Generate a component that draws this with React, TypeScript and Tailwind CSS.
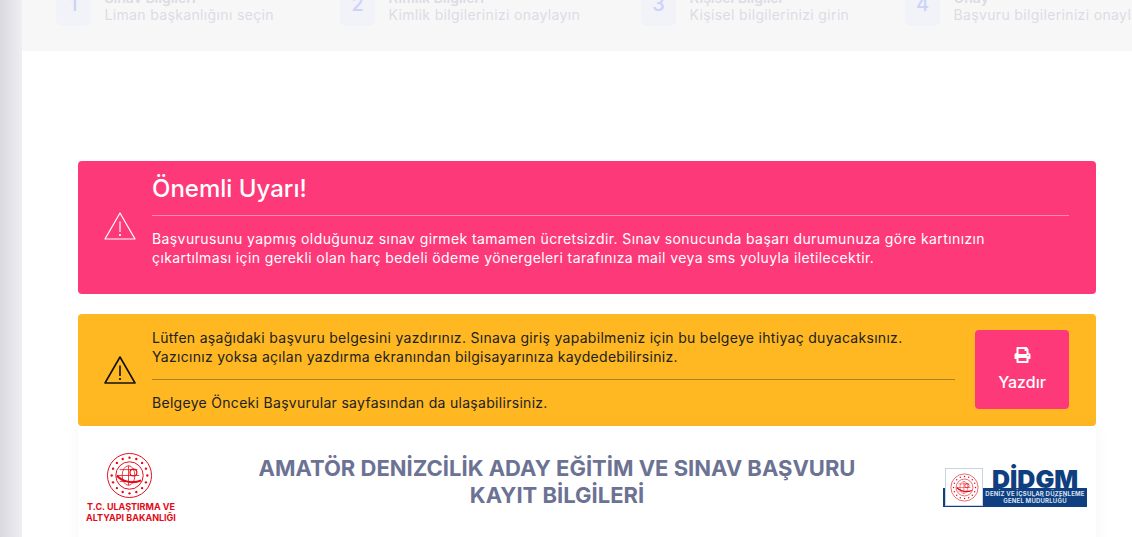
import {FaPrint} from "react-icons/fa";

const font = {fontFamily: "Inter, 'Noto Sans', sans-serif"};

const steps = [
  {no: "1", title: "Sınav Bilgileri", text: "Liman başkanlığını seçin", w: "w-[284px]"},
  {no: "2", title: "Kimlik Bilgileri", text: "Kimlik bilgilerinizi onaylayın", w: "w-[301px]"},
  {no: "3", title: "Kişisel Bilgiler", text: "Kişisel bilgilerinizi girin", w: "w-[264px]"},
  {no: "4", title: "Onay", text: "Başvuru bilgilerinizi onaylayın", w: "w-[227px]"},
];

function Warning({className, stroke}: {className: string; stroke: number}) {
  return (
    <svg viewBox="0 0 32 28" fill="none" stroke="currentColor" strokeLinejoin="round" className={className}>
      <path d="M16 1 L31 27 H1 Z" strokeWidth={stroke} />
      <path d="M16 9.5 V20" strokeWidth={stroke} />
      <circle cx="16" cy="23" r="0.7" fill="currentColor" />
    </svg>
  );
}

function Seal({size}: {size: number}) {
  const dots = Array.from({length: 16}, (_, i) => (i * Math.PI * 2) / 16);
  return (
    <svg width={size} height={size} viewBox="0 0 48 48" fill="none" stroke="#e30a17">
      <circle cx="24" cy="24" r="22.5" strokeWidth="1" />
      <circle cx="24" cy="24" r="14" strokeWidth="1" />
      {dots.map((a, i) => (
        <circle key={i} cx={24 + 18.2 * Math.cos(a)} cy={24 + 18.2 * Math.sin(a)} r="1.2" fill="#e30a17" stroke="none" />
      ))}
      <ellipse cx="23" cy="24" rx="6.5" ry="10" strokeWidth="0.8" />
      <path d="M12 24 H34 M14 18 H32 M14 30 H32 M23 14 V34" strokeWidth="0.8" />
      <path d="M11 24 C16 30 27 33 36 29" strokeWidth="2" />
      <circle cx="28" cy="21" r="3.5" strokeWidth="1.2" />
    </svg>
  );
}

export default function App() {
  return (
    <div className="flex h-screen overflow-hidden bg-white text-[14px]" style={font}>
      <div className="w-[22px] shrink-0 bg-gradient-to-r from-[#d9d9df] to-[#eeeef3]" />
      <main className="min-w-0 flex-1">
        {/* Stepper, scrolled mostly out of view */}
        <div className="flex h-[51px] items-end overflow-hidden whitespace-nowrap bg-[#f7f7f7] pb-[26px] pl-[34px]">
          {steps.map((s) => (
            <div key={s.no} className={`flex shrink-0 items-end gap-[13.5px] ${s.w}`}>
              <div className="-mb-[1px] flex h-[35px] w-[35px] shrink-0 items-start justify-center rounded-md bg-[#f2f3f9] text-[20px] font-medium leading-[27px] text-[#cdd2f8]">
                {s.no}
              </div>
              <div>
                <div className="text-[14px] font-semibold leading-[14px] text-[#dcdce4]">{s.title}</div>
                <div className="text-[14px] leading-[20px] tracking-[0.35px] text-[#dcdce6]">{s.text}</div>
              </div>
            </div>
          ))}
        </div>

        <div className="pl-[56px] pr-[36px] pt-[110px]">
          <section className="flex h-[133px] items-center rounded-[4px] bg-[#fd397a] pl-[26px] pr-[27px] text-white">
            <Warning stroke={1.2} className="mb-[3px] h-[28px] w-[32px] shrink-0" />
            <div className="mb-[14px] ml-[16px] flex-1">
              <h2 className="text-[24px] font-medium leading-[30px]">Önemli Uyarı!</h2>
              <hr className="mb-[13px] mt-[11px] border-white/40" />
              <p className="leading-[19px] tracking-[0.4px]">
                Başvurusunu yapmış olduğunuz sınav girmek tamamen ücretsizdir. Sınav sonucunda başarı durumunuza göre kartınızın
                <br />
                çıkartılması için gerekli olan harç bedeli ödeme yönergeleri tarafınıza mail veya sms yoluyla iletilecektir.
              </p>
            </div>
          </section>

          <section className="mt-[20px] flex h-[112px] items-center rounded-[4px] bg-[#ffb822] pl-[26px] pr-[27px] text-[#212121]">
            <Warning stroke={1.6} className="h-[28px] w-[32px] shrink-0 text-[#111]" />
            <div className="ml-[16px] flex-1">
              <p className="leading-[19px] tracking-[0.3px]">
                Lütfen aşağıdaki başvuru belgesini yazdırınız. Sınava giriş yapabilmeniz için bu belgeye ihtiyaç duyacaksınız.
                <br />
                Yazıcınız yoksa açılan yazdırma ekranından bilgisayarınıza kaydedebilirsiniz.
              </p>
              <hr className="my-[13px] border-[#a9801f]" />
              <p className="leading-[19px] tracking-[0.3px]">Belgeye Önceki Başvurular sayfasından da ulaşabilirsiniz.</p>
            </div>
            <button className="mb-[1px] ml-[20px] flex h-[79px] w-[94px] shrink-0 flex-col items-center justify-center gap-[9px] rounded-[4px] bg-[#fd397a] text-[16px] font-medium leading-[20px] text-white">
              <FaPrint className="h-[16px] w-[17px]" />
              Yazdır
            </button>
          </section>

          <section className="flex h-[200px] items-start bg-white pl-[8px] pr-[9px] pt-[26px] shadow-[0_0_13px_rgba(82,63,105,0.05)]">
            <div className="flex w-[90px] shrink-0 flex-col items-center">
              <div className="mr-[4px]">
                <Seal size={47} />
              </div>
              <div className="mt-[2px] text-center text-[9px] font-bold leading-[11px] text-[#e30a17]">
                T.C. ULAŞTIRMA VE
                <br />
                ALTYAPI BAKANLIĞI
              </div>
            </div>
            <h1 className="mt-[3px] flex-1 pl-[70px] pr-[75px] text-center text-[22px] font-bold leading-[27px] text-[#6c7293]">
              AMATÖR DENİZCİLİK ADAY EĞİTİM VE SINAV BAŞVURU KAYIT BİLGİLERİ
            </h1>
            <div className="mt-[16px] w-[144px] shrink-0">
              <div className="relative z-10 flex items-start pl-[2px]">
                <div className="flex h-[38px] w-[38px] items-center justify-center border border-[#c9d3e3] bg-white">
                  <Seal size={29} />
                </div>
                <div className="ml-[9px] mt-[1px] text-[25px] font-black leading-[20px] text-[#0f3f80]">DİDGM</div>
              </div>
              <div className="-mt-[18px] h-[19px] bg-[#0f3f80] pl-[40px] pt-[2px] text-center text-[6px] font-bold leading-[7px] tracking-[0.2px] text-[#d8e2f0]">
                DENİZ VE İÇSULAR DÜZENLEME
                <br />
                GENEL MÜDÜRLÜĞÜ
              </div>
            </div>
          </section>
        </div>
      </main>
    </div>
  );
}
